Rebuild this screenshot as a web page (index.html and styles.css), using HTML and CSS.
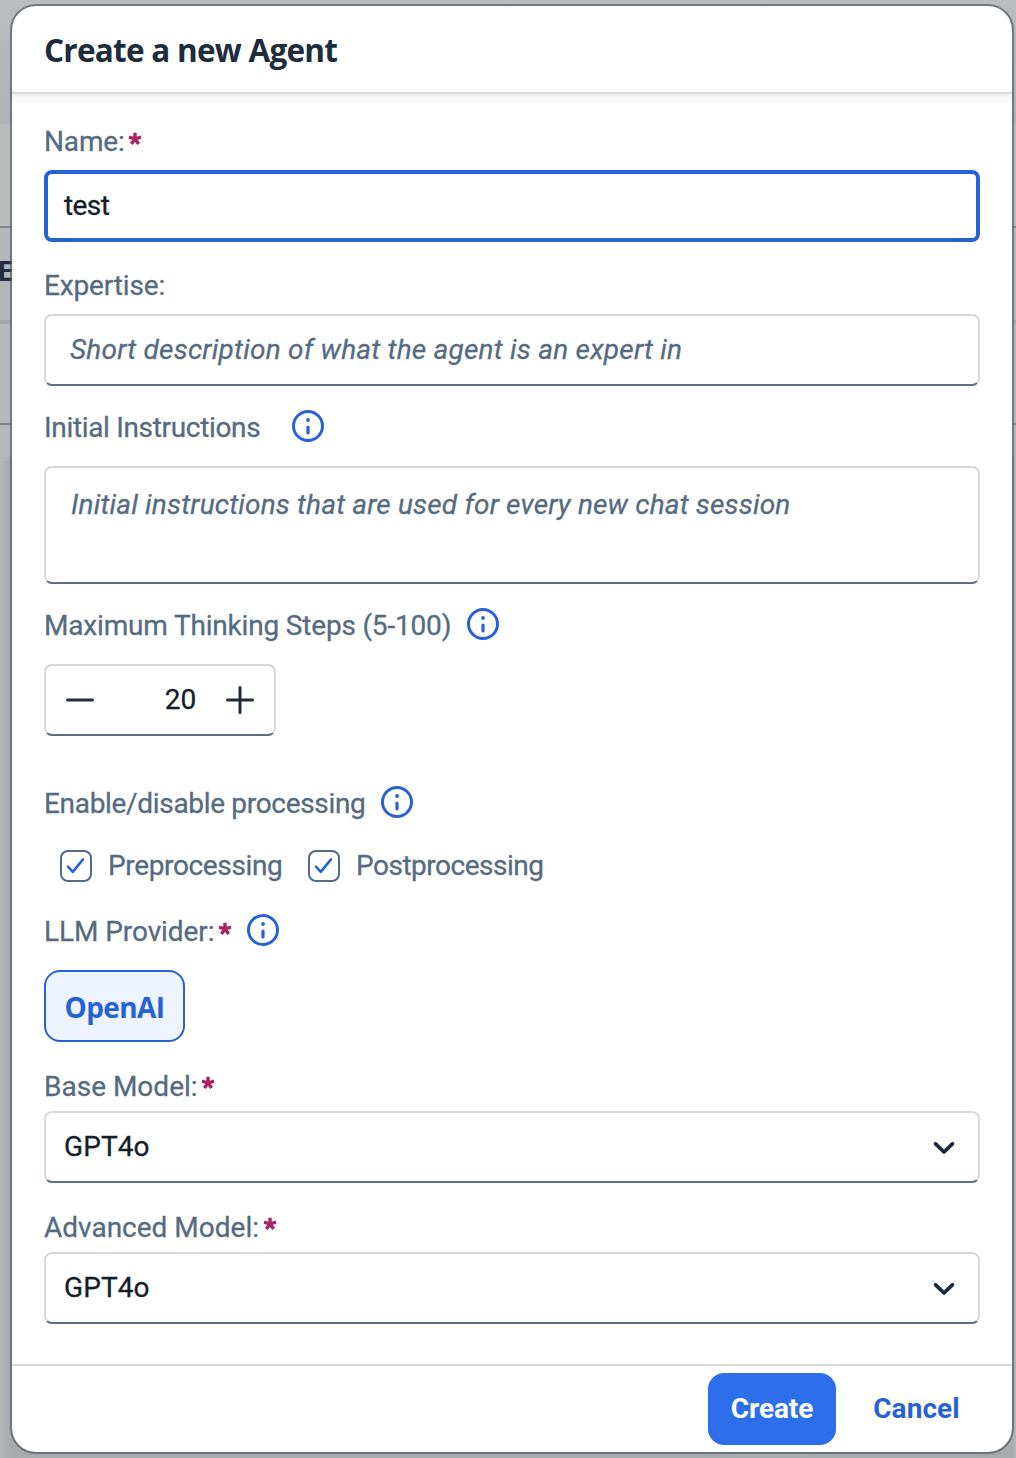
FILE: index.html
```html
<!DOCTYPE html>
<html lang="en">
<head>
<meta charset="utf-8">
<title>Create a new Agent</title>
<link rel="stylesheet" href="styles.css">
</head>
<body>
<svg class="defs" aria-hidden="true">
  <symbol id="info" viewBox="0 0 32 32"><circle cx="16" cy="16" r="14.5" fill="none" stroke="currentColor" stroke-width="3"/><circle cx="16" cy="10" r="1.9" fill="currentColor"/><path d="M16 17.2v5.8" stroke="currentColor" stroke-width="3.2" stroke-linecap="round"/></symbol>
  <symbol id="check" viewBox="0 0 32 32"><path d="M8 16.6l4.8 5.2L23 9.4" fill="none" stroke="currentColor" stroke-width="2.6" stroke-linecap="round" stroke-linejoin="round"/></symbol>
  <symbol id="chevron" viewBox="0 0 24 16"><path d="M3.6 3.8l8.4 8.2 8.4-8.2" fill="none" stroke="currentColor" stroke-width="3.8" stroke-linecap="round" stroke-linejoin="round"/></symbol>
  <symbol id="star" viewBox="0 0 14 14"><path d="M7 7V.8M7 7L1 5.1M7 7L13 5.1M7 7L3.3 12.1M7 7l3.7 5.1" stroke="currentColor" stroke-width="3.4"/></symbol>
</svg>
<div class="backdrop">
  <div class="band-top"></div>
  <div class="band-toolbar"></div>
  <div class="band-head">E</div>
  <div class="band-row"></div>
  <div class="band-gap"></div>
</div>
<main class="dialog">
  <header class="dialog-header"><h1>Create a new Agent</h1></header>
  <section class="dialog-body">
    <div class="label label-name"><span>Name:</span><svg class="star"><use href="#star"/></svg></div>
    <div class="field focused"><span class="value-test">test</span></div>

    <div class="label label-expertise"><span>Expertise:</span></div>
    <div class="field placeholder"><span class="hint-expertise">Short description of what the agent is an expert in</span></div>

    <div class="label info-label label-instructions"><span>Initial Instructions</span><svg class="info"><use href="#info"/></svg></div>
    <div class="field placeholder area"><span>Initial instructions that are used for every new chat session</span></div>

    <div class="label info-label label-steps"><span>Maximum Thinking Steps (5-100)</span><svg class="info"><use href="#info"/></svg></div>
    <div class="field stepper">
      <svg class="step-icon" viewBox="0 0 28 28"><path d="M1.5 14h25"/></svg>
      <span>20</span>
      <svg class="step-icon" viewBox="0 0 28 28"><path d="M1.5 14h25M14 1.5v25"/></svg>
    </div>

    <div class="label info-label label-processing"><span>Enable/disable processing</span><svg class="info"><use href="#info"/></svg></div>
    <div class="checks">
      <div class="check"><div class="box"><svg><use href="#check"/></svg></div><span class="check-pre">Preprocessing</span></div>
      <div class="check"><div class="box"><svg><use href="#check"/></svg></div><span class="check-post">Postprocessing</span></div>
    </div>

    <div class="label info-label label-provider"><span>LLM Provider:</span><svg class="star"><use href="#star"/></svg><svg class="info"><use href="#info"/></svg></div>
    <div class="toggle">OpenAI</div>

    <div class="label label-base"><span>Base Model:</span><svg class="star"><use href="#star"/></svg></div>
    <div class="field select"><span>GPT4o</span><svg class="chevron"><use href="#chevron"/></svg></div>

    <div class="label label-advanced"><span>Advanced Model:</span><svg class="star"><use href="#star"/></svg></div>
    <div class="field select"><span>GPT4o</span><svg class="chevron"><use href="#chevron"/></svg></div>
  </section>
  <footer class="dialog-footer">
    <div class="button primary">Create</div>
    <div class="button plain">Cancel</div>
  </footer>
</main>
</body>
</html>
```
FILE: styles.css
```css
* { box-sizing: border-box; }
body {
  margin: 0;
  height: 1458px;
  overflow: hidden;
  font: 28px/32px Roboto, sans-serif;
  color: #131e29;
  background: #b2b3b5;
  padding: 4px 2px 4px 10px;
}
.defs { position: absolute; width: 0; height: 0; }
svg { display: block; flex: none; }
span, h1 { white-space: nowrap; }
span { -webkit-text-stroke: .3px currentColor; }

/* dimmed page behind the dialog */
.backdrop { position: absolute; inset: 0; z-index: -1; background: linear-gradient(90deg, #b5b6b8, #a9aaac 10px, #a9aaac 1012px, #b5b6b8); }
.band-top { height: 124px; background: linear-gradient(#bbbcbd, #b0b1b4); }
.band-toolbar { height: 104px; background: #bababb; border-bottom: 2px solid #7e858e; }
.band-head { height: 96px; border-bottom: 4px solid #a5a6a8; background: #b5b6b7; color: #1d2d3e; font-weight: 700; line-height: 87px; text-indent: -2px; }
.band-row { height: 101px; border-bottom: 2px solid #7e858e; background: #b7b8b9; }
.band-gap { height: 32px; background: #b7b8b9; }

.dialog {
  width: 1004px;
  height: 1450px;
  display: flex;
  flex-direction: column;
  background: #fff;
  background-clip: padding-box;
  border: 2px solid rgba(75, 90, 108, .68);
  border-radius: 26px;
  overflow: hidden;
}
.dialog-header {
  height: 88px;
  flex: none;
  padding: 24px 32px 0;
  border-bottom: 2px solid #d9d9d9;
  box-shadow: 0 2px 7px rgba(34, 54, 73, .12);
}
h1 { margin: 0; font: 700 31.5px/40px "Open Sans", sans-serif; letter-spacing: -.75px; color: #1d2d3e; }

.dialog-body { flex: 1; padding: 32px 32px 0; }
.label { display: flex; height: 32px; color: #556b82; }
.info-label > span { padding-top: 2px; }
.star { width: 14px; height: 14px; color: #aa2264; margin: 6px 0 0 3px; }
.info { width: 32px; height: 32px; margin-left: 16px; color: #2762d4; }

.field {
  display: flex;
  align-items: center;
  height: 72px;
  margin-top: 12px;
  border: 2px solid #d3d9dd;
  border-bottom-color: #5b6e82;
  border-radius: 8px;
  padding: 0 22px 0 18px;
}
.focused { border: 4px solid #2762d4; padding-left: 16px; }
.value-test { letter-spacing: -.6px; }
.placeholder { font-style: italic; color: #556b82; padding-left: 24px; letter-spacing: .17px; }
.hint-expertise { letter-spacing: .22px; }
.area { height: 118px; margin-top: 24px; align-items: flex-start; padding: 21px 22px 0 25px; }

.label-name { letter-spacing: -.15px; }
.label-expertise { margin-top: 28px; letter-spacing: -.15px; }
.label-instructions { margin-top: 24px; letter-spacing: -.33px; }
.label-instructions .info { margin-left: 32px; }
.label-steps { margin-top: 24px; letter-spacing: -.18px; }

.stepper { width: 232px; margin-top: 24px; padding: 0 20px; justify-content: space-between; }
.stepper span { margin-left: 41px; }
.step-icon { width: 28px; height: 28px; fill: none; stroke: #1d2d3e; stroke-width: 3; stroke-linecap: round; }

.label-processing { margin-top: 50px; letter-spacing: -.32px; }
.checks { display: flex; gap: 24px; margin: 32px 0 0 16px; color: #556b82; }
.check { display: flex; gap: 16px; height: 32px; }
.box { width: 32px; height: 32px; border: 2px solid #556b82; border-radius: 8px; color: #2762d4; }
.box svg { width: 32px; height: 32px; margin: -2px; }
.check-pre { width: 176px; letter-spacing: -.35px; }
.check-post { letter-spacing: -.5px; }

.label-provider { margin-top: 32px; letter-spacing: -.08px; }
.label-provider .star { margin: 8px 0 0 4px; }
.label-provider .info { margin-left: 15px; }
.toggle {
  width: 141px;
  height: 72px;
  margin-top: 24px;
  border: 2px solid #2762d4;
  border-radius: 16px;
  background: #edf4ff;
  color: #2762d4;
  font-family: "Open Sans", sans-serif;
  font-weight: 700;
  line-height: 71px;
  text-align: center;
  letter-spacing: -.6px;
}
.label-base { margin-top: 28px; letter-spacing: 0; }
.label-advanced { margin-top: 28px; letter-spacing: 0; }
.label-advanced .star { margin-left: 4px; }
.label-base span, .label-advanced span { padding-top: 1px; }
.select { margin-top: 9px; justify-content: space-between; letter-spacing: .1px; }
.chevron { width: 24px; height: 16px; color: #1d2d3e; margin-top: 1px; }

.dialog-footer {
  height: 88px;
  flex: none;
  display: flex;
  gap: 16px;
  justify-content: flex-end;
  padding: 7px 32px 0;
  border-top: 2px solid #d9d9d9;
}
.button { height: 72px; font-weight: 700; line-height: 72px; text-align: center; border-radius: 16px; }
.primary { width: 128px; background: #2d6fea; color: #fff; letter-spacing: -.1px; }
.plain { width: 128px; color: #2762d4; letter-spacing: .1px; text-indent: 1px; }
```
